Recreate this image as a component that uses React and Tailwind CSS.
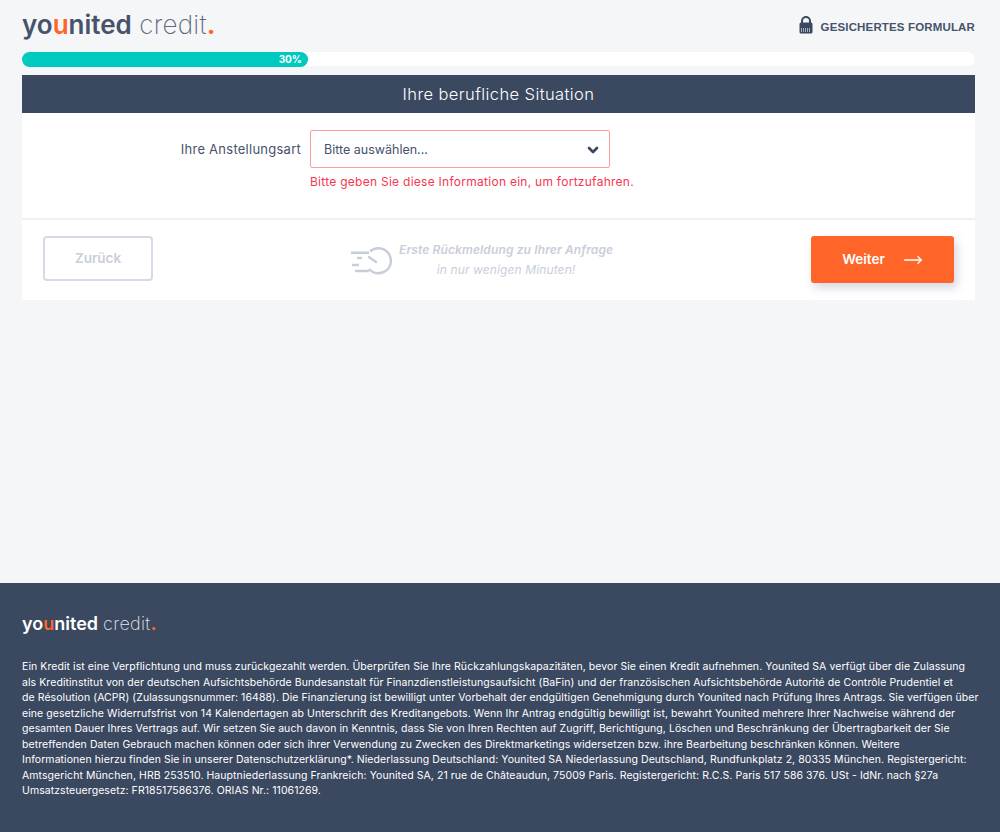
import { ChevronDown, MoveRight } from "lucide-react";

const legalLines = [
  "Ein Kredit ist eine Verpflichtung und muss zurückgezahlt werden. Überprüfen Sie Ihre Rückzahlungskapazitäten, bevor Sie einen Kredit aufnehmen. Younited SA verfügt über die Zulassung",
  "als Kreditinstitut von der deutschen Aufsichtsbehörde Bundesanstalt für Finanzdienstleistungsaufsicht (BaFin) und der französischen Aufsichtsbehörde Autorité de Contrôle Prudentiel et",
  "de Résolution (ACPR) (Zulassungsnummer: 16488). Die Finanzierung ist bewilligt unter Vorbehalt der endgültigen Genehmigung durch Younited nach Prüfung Ihres Antrags. Sie verfügen über",
  "eine gesetzliche Widerrufsfrist von 14 Kalendertagen ab Unterschrift des Kreditangebots. Wenn Ihr Antrag endgültig bewilligt ist, bewahrt Younited mehrere Ihrer Nachweise während der",
  "gesamten Dauer Ihres Vertrags auf. Wir setzen Sie auch davon in Kenntnis, dass Sie von Ihren Rechten auf Zugriff, Berichtigung, Löschen und Beschränkung der Übertragbarkeit der Sie",
  "betreffenden Daten Gebrauch machen können oder sich ihrer Verwendung zu Zwecken des Direktmarketings widersetzen bzw. ihre Bearbeitung beschränken können. Weitere",
  "Informationen hierzu finden Sie in unserer Datenschutzerklärung*. Niederlassung Deutschland: Younited SA Niederlassung Deutschland, Rundfunkplatz 2, 80335 München. Registergericht:",
  "Amtsgericht München, HRB 253510. Hauptniederlassung Frankreich: Younited SA, 21 rue de Châteaudun, 75009 Paris. Registergericht: R.C.S. Paris 517 586 376. USt - IdNr. nach §27a",
  "Umsatzsteuergesetz: FR18517586376. ORIAS Nr.: 11061269.",
];

const Logo = ({ big, light }) => (
  <div
    className={`font-['Inter',sans-serif] whitespace-nowrap leading-none ${
      big ? "text-[26px]" : "text-[18px]"
    } ${light ? "text-white" : "text-[#46536b]"}`}
  >
    <span className="font-semibold">
      yo<span className="text-[#ff6428]">u</span>nited
    </span>{" "}
    <span className={`font-extralight tracking-[0.3px] ${light ? "text-[#e4e7ec]" : "text-[#5c687d]"}`}>
      credit<span className="font-bold text-[#ff6428]">.</span>
    </span>
  </div>
);

const LockIcon = () => (
  <svg width="14" height="18" viewBox="0 0 14 18">
    <path d="M3 8V5a4 4 0 0 1 8 0v3" fill="none" stroke="#3a4860" strokeWidth="2" />
    <rect x="0.5" y="6.5" width="13" height="11" rx="1.5" fill="#3a4860" />
    <path d="M2 13h10M2 15h10" stroke="#c5cbd6" strokeWidth="1.4" strokeDasharray="1 1" />
  </svg>
);

const ClockIcon = () => (
  <svg width="42" height="30" viewBox="0 0 42 30" fill="none" stroke="#c6ced9" strokeWidth="2.4">
    <path d="M20 5.5A12.5 12.5 0 1 1 19 23" />
    <path d="M19 11l7 5" strokeLinecap="round" />
    <path d="M1 6.7h18M7 12h5M2 19h7M5 25h14" />
  </svg>
);

export default function App() {
  return (
    <div className="min-h-[832px] flex flex-col bg-[#f5f6f8] font-['Inter',sans-serif]">
      <main className="flex-1 px-[22px] pr-[25px]">
        <header className="h-[52px] flex items-center justify-between">
          <div className="-mt-[3px]">
            <Logo big />
          </div>
          <div className="flex items-center gap-2 pt-[4px]">
            <div className="-mt-[7px]">
              <LockIcon />
            </div>
            <span className="text-[11.5px] font-bold text-[#46536b] font-['Liberation_Sans',sans-serif] tracking-[0.15px]">
              GESICHERTES FORMULAR
            </span>
          </div>
        </header>

        <div className="h-[14px] bg-white rounded-full">
          <div className="h-[15px] w-[286px] bg-[#00c9bf] rounded-full flex items-center justify-end pr-[6px]">
            <span className="text-[10px] font-bold text-white">30%</span>
          </div>
        </div>

        <div className="mt-[9px] h-[38px] bg-[#3a4860] flex items-center justify-center text-[16.5px] tracking-[0.4px] text-white font-light">
          Ihre berufliche Situation
        </div>

        <section className="bg-white h-[107px] border-b-2 border-[#eef0f4] pt-[17px] flex items-start">
          <label className="w-[279px] h-[38px] pt-[1px] flex items-center justify-end text-[13px] tracking-[0.25px] text-[#46536b]">
            Ihre Anstellungsart
          </label>
          <div className="ml-[9px]">
            <div className="w-[300px] h-[38px] pt-[2px] border border-[#ff9a9a] rounded-[2px] flex items-center justify-between pl-[13px] pr-[8px] text-[12.5px] text-[#46536b]">
              <span>Bitte auswählen...</span>
              <ChevronDown size={16} strokeWidth={4} className="text-[#3a4860]" />
            </div>
            <p className="mt-[6px] text-[12px] tracking-[0.27px] leading-[15px] text-[#f5364f] whitespace-nowrap">
              Bitte geben Sie diese Information ein, um fortzufahren.
            </p>
          </div>
        </section>

        <section className="bg-white h-[80px] px-[21px] flex items-start pt-[16px]">
          <button className="w-[110px] h-[45px] border-2 border-[#d6dae6] rounded-[4px] text-[13.5px] font-semibold text-[#c9cedb]">
            Zurück
          </button>
          <div className="ml-[197px] flex items-start gap-[7px] pt-[10px]">
            <ClockIcon />
            <div className="text-center italic text-[12px] tracking-[0.12px] text-[#c9cedb] leading-[20px] -mt-[6px]">
              <div className="font-semibold">Erste Rückmeldung zu Ihrer Anfrage</div>
              <div>in nur wenigen Minuten!</div>
            </div>
          </div>
          <button className="ml-auto w-[143px] h-[47px] bg-[#ff6428] rounded-[3px] shadow-[3px_5px_10px_rgba(120,130,170,0.3)] flex items-center justify-center gap-[18px] text-[13.5px] font-semibold text-white">
            Weiter
            <MoveRight size={20} strokeWidth={1.6} />
          </button>
        </section>
      </main>

      <footer className="h-[249px] bg-[#3a4860] px-[22px] pt-[32px] text-white">
        <Logo light />
        <p className="mt-[26px] text-[10.5px] tracking-[0.07px] leading-[15.5px] whitespace-nowrap">
          {legalLines.map((line) => (
            <span key={line} className="block">
              {line}
            </span>
          ))}
        </p>
      </footer>
    </div>
  );
}
